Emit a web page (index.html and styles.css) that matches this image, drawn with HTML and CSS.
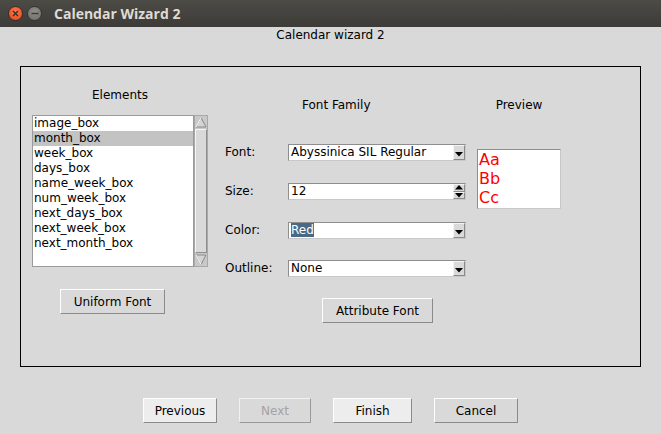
FILE: index.html
```html
<!DOCTYPE html>
<html>
<head>
<meta charset="utf-8">
<link rel="stylesheet" href="styles.css">
</head>
<body>
<div class="titlebar">
  <div class="tb-btn tb-close">
    <svg width="7" height="7" viewBox="0 0 7 7"><path d="M1 1L6 6M6 1L1 6" stroke="#3a2a24" stroke-width="1.3"/></svg>
  </div>
  <div class="tb-btn tb-min">
    <svg width="8" height="3" viewBox="0 0 8 3"><path d="M0.5 1.5H7.5" stroke="#3c3b37" stroke-width="1.4"/></svg>
  </div>
  <div class="tb-title">Calendar Wizard 2</div>
</div>

<div class="heading">Calendar wizard 2</div>

<div class="frame">
  <div class="col-elements">
    <div class="label">Elements</div>
    <div class="listwrap">
      <div class="list">
        <div class="item">image_box</div>
        <div class="item selected">month_box</div>
        <div class="item">week_box</div>
        <div class="item">days_box</div>
        <div class="item">name_week_box</div>
        <div class="item">num_week_box</div>
        <div class="item">next_days_box</div>
        <div class="item">next_week_box</div>
        <div class="item">next_month_box</div>
      </div>
      <div class="scrollbar">
        <div class="sb-arrow">
          <svg width="12" height="12" viewBox="0 0 12 12"><polygon points="6,1.5 11,11 1,11" fill="#d4d4d4" stroke="#8a8a8a" stroke-width="1"/><path d="M6 1.5L1 11" stroke="#ffffff" stroke-width="1"/></svg>
        </div>
        <div class="sb-slider"></div>
        <div class="sb-arrow">
          <svg width="12" height="12" viewBox="0 0 12 12"><polygon points="1,1 11,1 6,10.5" fill="#d4d4d4" stroke="#8a8a8a" stroke-width="1"/><path d="M1 1L6 10.5" stroke="#ffffff" stroke-width="1"/></svg>
        </div>
      </div>
    </div>
    <button class="btn uniform">Uniform Font</button>
  </div>

  <div class="col-font">
    <div class="ff-label">Font Family</div>
    <div class="row r1">
      <span class="lbl">Font:</span>
      <div class="combo">
        <span class="ctext">Abyssinica SIL Regular</span>
        <span class="carrow"><svg width="8" height="5" viewBox="0 0 8 5"><polygon points="0,0 8,0 4,4.5" fill="#000"/></svg></span>
      </div>
    </div>
    <div class="row r2">
      <span class="lbl">Size:</span>
      <div class="combo">
        <span class="ctext">12</span>
        <span class="spin">
          <span class="sbtn"><svg width="8" height="5" viewBox="0 0 8 5"><polygon points="4,0 8,4.5 0,4.5" fill="#000"/></svg></span>
          <span class="sbtn"><svg width="8" height="5" viewBox="0 0 8 5"><polygon points="0,0 8,0 4,4.5" fill="#000"/></svg></span>
        </span>
      </div>
    </div>
    <div class="row r3">
      <span class="lbl">Color:</span>
      <div class="combo">
        <span class="ctext"><span class="sel">Red</span></span>
        <span class="carrow"><svg width="8" height="5" viewBox="0 0 8 5"><polygon points="0,0 8,0 4,4.5" fill="#000"/></svg></span>
      </div>
    </div>
    <div class="row r4">
      <span class="lbl">Outline:</span>
      <div class="combo">
        <span class="ctext">None</span>
        <span class="carrow"><svg width="8" height="5" viewBox="0 0 8 5"><polygon points="0,0 8,0 4,4.5" fill="#000"/></svg></span>
      </div>
    </div>
    <button class="btn attribute">Attribute Font</button>
  </div>

  <div class="col-preview">
    <div class="label">Preview</div>
    <div class="preview">Aa<br>Bb<br>Cc</div>
  </div>
</div>

<div class="buttons">
  <button class="btn light w-prev">Previous</button>
  <button class="btn disabled w-next">Next</button>
  <button class="btn light w-finish">Finish</button>
  <button class="btn w-cancel">Cancel</button>
</div>
</body>
</html>
```

FILE: styles.css
```css
html, body {
  margin: 0;
  padding: 0;
}
body {
  width: 661px;
  height: 434px;
  overflow: hidden;
  background: #d9d9d9;
  font-family: "DejaVu Sans", sans-serif;
  font-size: 12px;
  color: #000;
}

/* Title bar */
.titlebar {
  height: 27px;
  background: linear-gradient(#4d4b46, #3c3b37);
  display: flex;
  align-items: center;
  padding-left: 8px;
  box-sizing: border-box;
}
.tb-btn {
  width: 15px;
  height: 15px;
  border-radius: 50%;
  display: flex;
  align-items: center;
  justify-content: center;
  box-sizing: border-box;
}
.tb-close {
  background: radial-gradient(circle at 50% 35%, #f8784c, #e1481c);
  border: 1px solid #3a2d26;
}
.tb-min {
  margin-left: 4px;
  background: radial-gradient(circle at 50% 35%, #908e88, #6f6d68);
  border: 1px solid #34332f;
}
.tb-title {
  margin-left: 12px;
  font-family: "Open Sans", sans-serif;
  font-weight: 700;
  font-size: 14px;
  color: #dfdbd2;
  line-height: 27px;
}

.heading {
  margin-top: 1px;
  line-height: 15px;
  text-align: center;
}

/* Frame */
.frame {
  margin: 23px 0 0 20px;
  width: 619px;
  height: 299px;
  border: 1px solid #000;
  display: flex;
  align-items: flex-start;
}

.label {
  line-height: 15px;
  text-align: center;
}

.col-elements {
  margin-left: 11px;
  width: 176px;
  padding-top: 21px;
  display: flex;
  flex-direction: column;
}
.listwrap {
  margin-top: 12px;
  height: 152px;
  display: flex;
}
.list {
  width: 162px;
  height: 152px;
  box-sizing: border-box;
  background: #fff;
  border: 1px solid #9a9a9a;
}
.item {
  line-height: 15px;
  height: 15px;
  padding-left: 1px;
  white-space: nowrap;
}
.item.selected {
  background: #c3c3c3;
}
.scrollbar {
  width: 14px;
  height: 152px;
  box-sizing: border-box;
  border: 1px solid #a8a8a8;
  background: #c9c9c9;
  display: flex;
  flex-direction: column;
}
.sb-arrow {
  height: 12px;
  display: flex;
  justify-content: center;
}
.sb-slider {
  flex: 1;
  margin: 1px 0;
  background: #d9d9d9;
  border: 1px solid;
  border-color: #f4f4f4 #8f8f8f #8f8f8f #f4f4f4;
}

/* Buttons */
.btn {
  box-sizing: border-box;
  height: 25px;
  padding: 0;
  font-family: "DejaVu Sans", sans-serif;
  font-size: 12px;
  color: #000;
  background: #d9d9d9;
  border: 1px solid;
  border-color: #ffffff #8a8a8a #8a8a8a #ffffff;
  text-align: center;
}
.btn.light {
  background: #ededed;
}
.btn.disabled {
  color: #a3a3a3;
  border-color: #f0f0f0 #9a9a9a #9a9a9a #f0f0f0;
}
.uniform {
  margin-top: 22px;
  margin-left: 28px;
  width: 105px;
}

/* Font column */
.col-font {
  margin-left: 17px;
  width: 241px;
  padding-top: 31px;
  display: flex;
  flex-direction: column;
}
.ff-label {
  padding-left: 77px;
  line-height: 15px;
}
.row {
  display: flex;
  align-items: center;
  height: 17px;
}
.r1 { margin-top: 31px; }
.r2 { margin-top: 22px; }
.r3 { margin-top: 22px; }
.r4 { margin-top: 21px; }
.lbl {
  width: 63px;
  line-height: 15px;
}
.combo {
  width: 178px;
  height: 17px;
  box-sizing: border-box;
  background: #fff;
  border: 1px solid;
  border-color: #8e8e8e #c8c8c8 #c8c8c8 #8e8e8e;
  display: flex;
}
.ctext {
  flex: 1;
  padding-left: 2px;
  line-height: 15px;
  white-space: nowrap;
  overflow: hidden;
}
.sel {
  background: #4a6984;
  color: #fff;
}
.carrow {
  width: 12px;
  box-sizing: border-box;
  background: #d9d9d9;
  border: 1px solid;
  border-color: #f4f4f4 #8a8a8a #8a8a8a #f4f4f4;
  display: flex;
  align-items: center;
  justify-content: center;
  padding-top: 3px;
}
.spin {
  width: 12px;
  display: flex;
  flex-direction: column;
}
.sbtn {
  flex: 1;
  box-sizing: border-box;
  background: #d9d9d9;
  border: 1px solid;
  border-color: #f4f4f4 #8a8a8a #8a8a8a #f4f4f4;
  display: flex;
  align-items: center;
  justify-content: center;
}
.attribute {
  margin-top: 21px;
  margin-left: 97px;
  width: 111px;
}

/* Preview column */
.col-preview {
  margin-left: 11px;
  width: 84px;
  padding-top: 31px;
  display: flex;
  flex-direction: column;
}
.preview {
  margin-top: 36px;
  height: 60px;
  box-sizing: border-box;
  background: #fff;
  border: 1px solid;
  border-color: #8e8e8e #c8c8c8 #c8c8c8 #8e8e8e;
  color: #ff0000;
  font-size: 16px;
  line-height: 19px;
  padding-left: 1px;
}

/* Bottom buttons */
.buttons {
  margin-top: 31px;
  display: flex;
  justify-content: center;
  gap: 22px;
}
.w-prev { width: 74px; }
.w-next { width: 72px; }
.w-finish { width: 79px; }
.w-cancel { width: 84px; }
```
